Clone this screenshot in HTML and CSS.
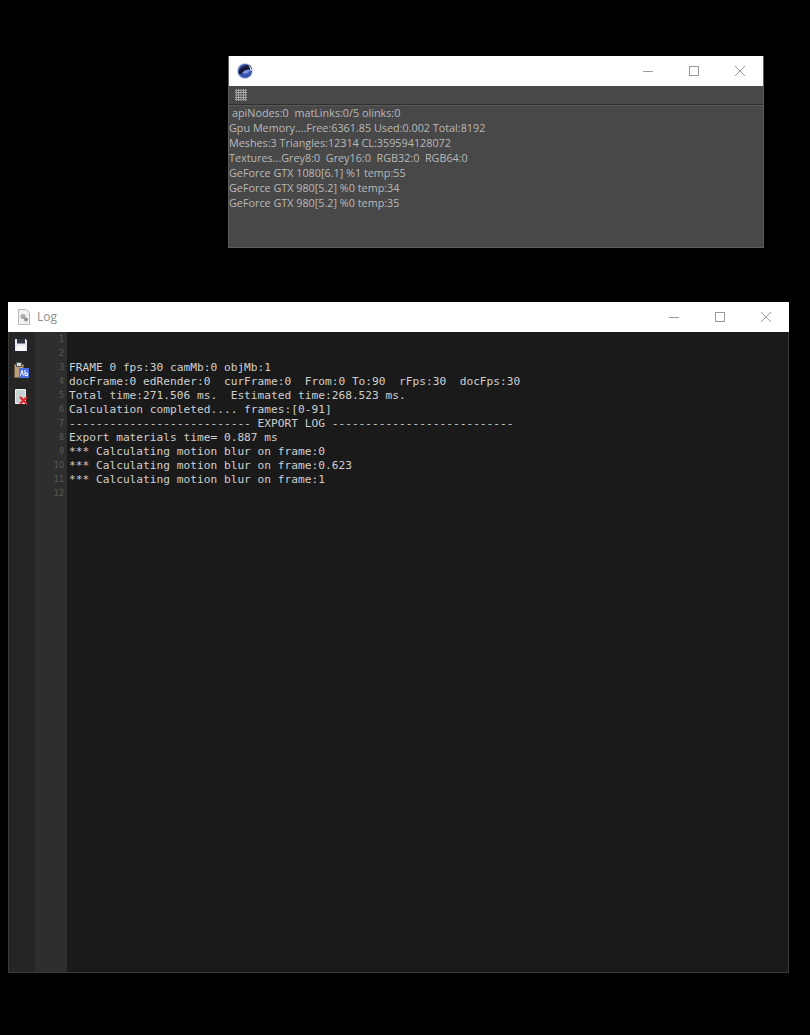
FILE: index.html
```html
<!DOCTYPE html>
<html lang="en">
<head>
<meta charset="utf-8">
<title>Log</title>
<link rel="stylesheet" href="styles.css">
</head>
<body>
<section class="window stats">
  <header class="titlebar">
    <svg class="app-icon" width="18" height="18" viewBox="0 0 18 18">
      <circle cx="9" cy="9" r="8" fill="#c9cfe8"/>
      <circle cx="9" cy="9" r="7" fill="#3a55ad"/>
      <path d="M2.500 11C3 6 8 3 13 3c2 1 3 3 3 5-3-1-6 0-7 2-2 2-4 2.500-6.500 1z" fill="#15193a"/>
      <path d="M6 11c2-3 5-4 8-3-1 3-5 5-8 3z" fill="#7f95e4"/>
      <path d="M12 3c2 1 4 3.500 4 6l-1.700-.7c0-2-1-3.800-2.300-5.300z" fill="#f0f2fa"/>
    </svg>
    <div class="controls">
      <svg width="12" height="12" viewBox="0 0 12 12"><path d="M1 6.500h10" stroke="#9a9a9a" fill="none"/></svg>
      <svg width="12" height="12" viewBox="0 0 12 12"><rect x="1.500" y="1.500" width="9" height="9" stroke="#9a9a9a" fill="none"/></svg>
      <svg width="12" height="12" viewBox="0 0 12 12"><path d="M1 1l10 10M11 1L1 11" stroke="#9a9a9a" fill="none"/></svg>
    </div>
  </header>
  <div class="toolbar">
    <div class="grip"></div>
  </div>
  <div class="stats-body">
    <p class="indented">apiNodes:0&nbsp; matLinks:0/5 olinks:0</p>
    <p>Gpu Memory....Free:6361.85 Used:0.002 Total:8192</p>
    <p>Meshes:3 Triangles:12314 CL:359594128072</p>
    <p>Textures...Grey8:0&nbsp; Grey16:0&nbsp; RGB32:0&nbsp; RGB64:0</p>
    <p>GeForce GTX 1080[6.1] %1 temp:55</p>
    <p>GeForce GTX 980[5.2] %0 temp:34</p>
    <p>GeForce GTX 980[5.2] %0 temp:35</p>
  </div>
</section>

<section class="window log">
  <header class="titlebar log-title">
    <svg class="doc-icon" width="14" height="16" viewBox="0 0 14 16">
      <path d="M1.500.5h8l3 3v12h-11z" fill="#f1f1f1" stroke="#b9b9b9"/>
      <circle cx="6" cy="7.500" r="2.500" fill="#a8a8a8"/>
      <circle cx="9" cy="10.500" r="2" fill="#8f8f8f"/>
    </svg>
    <span class="log-name">Log</span>
    <div class="controls">
      <svg width="12" height="12" viewBox="0 0 12 12"><path d="M1 6.500h10" stroke="#9a9a9a" fill="none"/></svg>
      <svg width="12" height="12" viewBox="0 0 12 12"><rect x="1.500" y="1.500" width="9" height="9" stroke="#9a9a9a" fill="none"/></svg>
      <svg width="12" height="12" viewBox="0 0 12 12"><path d="M1 1l10 10M11 1L1 11" stroke="#9a9a9a" fill="none"/></svg>
    </div>
  </header>
  <div class="log-body">
    <aside class="tools">
      <svg width="14" height="14" viewBox="0 0 14 14">
        <path d="M.5.5h11l2 2v11H.5z" fill="#e8e8ee" stroke="#20242e"/>
        <rect x="3" y="1" width="8" height="4.500" fill="#30343e"/>
        <rect x="2.500" y="8" width="9" height="5" fill="#f8f8f8"/>
      </svg>
      <svg width="15" height="17" viewBox="0 0 15 17">
        <rect x=".5" y="2.500" width="9" height="13" fill="#b9a27a" stroke="#6d5c43"/>
        <rect x="2.500" y=".5" width="5" height="4" fill="#d5d5d5" stroke="#555"/>
        <rect x="5" y="6" width="10" height="10" fill="#4f6fe0"/>
        <path d="M6.500 13.500l1.500-5 1.500 5M11 8v5.500h2.500V11H11" stroke="#fff" fill="none"/>
      </svg>
      <svg width="15" height="16" viewBox="0 0 15 16">
        <path d="M1.500.5h10v14h-10z" fill="#c9d2d2" stroke="#eef2f2"/>
        <path d="M6 8l7 7m0-7l-7 7" stroke="#e0242a" stroke-width="2.200" fill="none"/>
      </svg>
    </aside>
    <div class="gutter">
      <span>1</span><span>2</span><span>3</span><span>4</span><span>5</span><span>6</span>
      <span>7</span><span>8</span><span>9</span><span>10</span><span>11</span><span>12</span>
    </div>
    <pre class="code">


FRAME 0 fps:30 camMb:0 objMb:1
docFrame:0 edRender:0  curFrame:0  From:0 To:90  rFps:30  docFps:30
Total time:271.506 ms.  Estimated time:268.523 ms.
Calculation completed.... frames:[0-91]
--------------------------- EXPORT LOG ---------------------------
Export materials time= 0.887 ms
*** Calculating motion blur on frame:0
*** Calculating motion blur on frame:0.623
*** Calculating motion blur on frame:1
</pre>
  </div>
</section>
</body>
</html>
```

FILE: styles.css
```css
* {
  box-sizing: border-box;
}

html,
body {
  margin: 0;
  padding: 0;
  background: #000;
}

body {
  padding-top: 56px;
  height: 1035px;
  overflow: hidden;
}

.window {
  display: flex;
  flex-direction: column;
}

.stats {
  margin-left: 228px;
  width: 536px;
  height: 192px;
  border-left: 1px solid #5c5c5c;
  border-right: 1px solid #5c5c5c;
  border-bottom: 1px solid #5c5c5c;
  background: #474747;
}

.titlebar {
  height: 30px;
  flex: none;
  background: #fff;
  display: flex;
  align-items: center;
}

.app-icon {
  margin-left: 7px;
}

.controls {
  margin-left: auto;
  display: flex;
  gap: 34px;
  margin-right: 17px;
}

.toolbar {
  height: 19px;
  flex: none;
  background: #484848;
  border-bottom: 1px solid #2e2e2e;
  display: flex;
  align-items: center;
  padding-left: 6px;
}

.grip {
  width: 12px;
  height: 12px;
  background-image: radial-gradient(circle at 1.200px 1.200px, #b5b5b5 0.800px, transparent 1px);
  background-size: 2.400px 2.400px;
}

.stats-body {
  flex: 1;
  background: #484848;
  border-top: 1px solid #5a5a5a;
  font: 10.800px/15px "Open Sans", "Noto Sans", sans-serif;
  color: #b9b9b9;
}

.stats-body p {
  margin: 0;
  white-space: nowrap;
}

.stats-body .indented {
  margin-top: -1px;
  padding-left: 3px;
}

.log {
  margin-top: 54px;
  margin-left: 8px;
  width: 781px;
  height: 671px;
  border: 1px solid #3a3a3a;
  border-top: none;
  background: #1a1a1a;
}

.log-title {
  padding-left: 9px;
  margin: 0 -1px;
}

.doc-icon {
  margin-top: -1px;
}

.log-name {
  margin-left: 6px;
  margin-top: -2px;
  font: 12px "Open Sans", "Noto Sans", sans-serif;
  color: #8f8f8f;
}

.log-body {
  flex: 1;
  display: flex;
  min-height: 0;
}

.tools {
  width: 26px;
  flex: none;
  background: #252525;
  display: flex;
  flex-direction: column;
  align-items: center;
  padding: 6px 2px 0 0;
  gap: 10px;
}

.gutter {
  width: 32px;
  flex: none;
  background: #2e2e2e;
  display: flex;
  flex-direction: column;
  align-items: flex-end;
  padding: 1px 3px 0 0;
  font: 8px/14px "DejaVu Sans", sans-serif;
  color: #5a5a5a;
}

.code {
  margin: 0;
  padding: 1px 0 0 2px;
  flex: 1;
  font: 11.200px/14px "DejaVu Sans Mono", monospace;
  color: #cfcfcf;
}
```
